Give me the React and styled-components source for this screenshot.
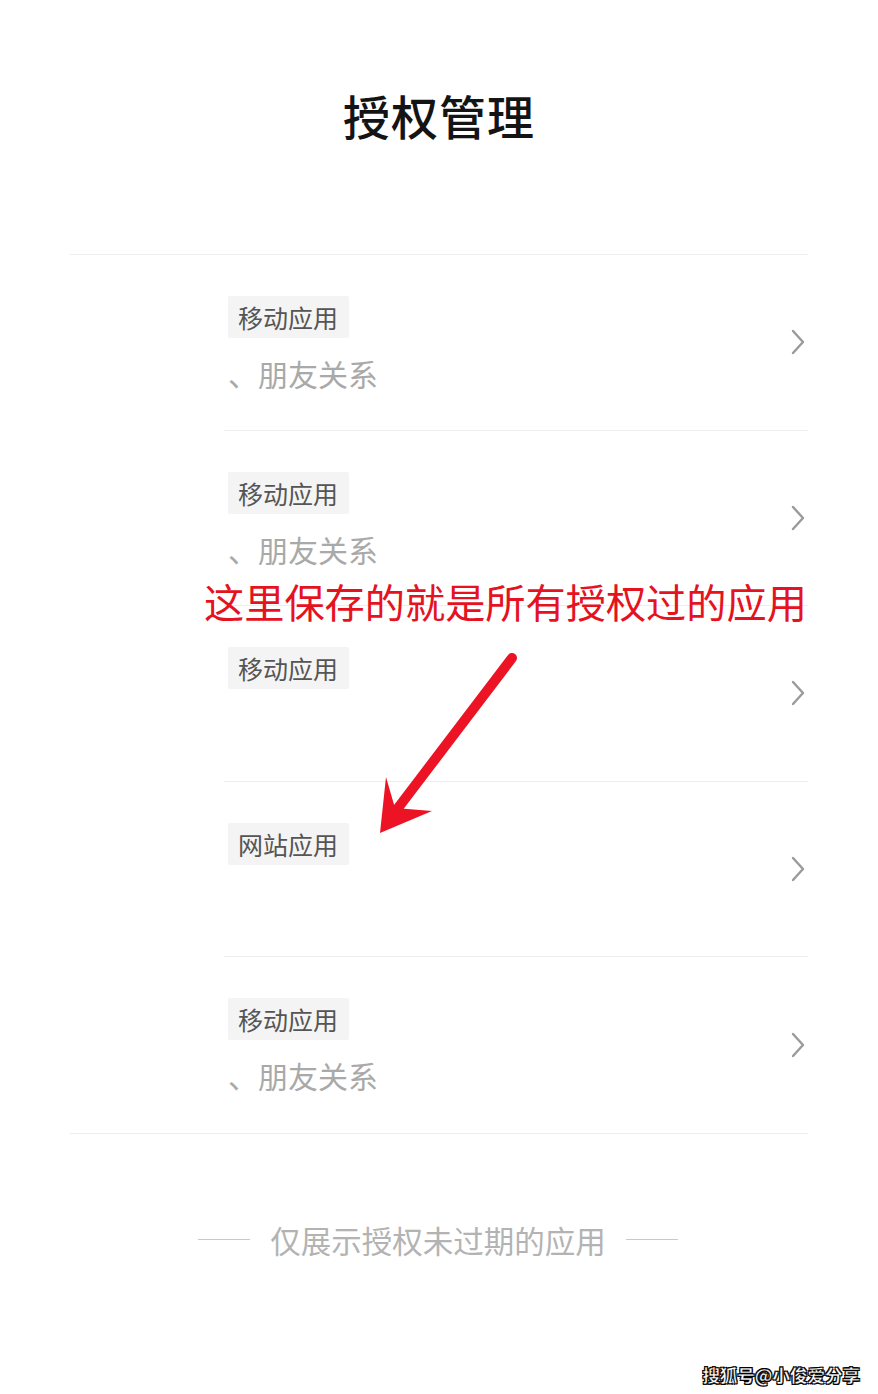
import styled, { createGlobalStyle } from "styled-components"

const GlobalStyle = createGlobalStyle`
	html, body {
		margin: 0;
		padding: 0;
		background: #fff;
	}
	body {
		font-family: "Noto Sans CJK SC", "Noto Sans", sans-serif;
	}
`;

const apps = [
	{ type: "移动应用", desc: "、朋友关系" },
	{ type: "移动应用", desc: "、朋友关系" },
	{ type: "移动应用" },
	{ type: "网站应用" },
	{ type: "移动应用", desc: "、朋友关系" },
];

const Chevron = () => (
	<svg width="16" height="26" viewBox="0 0 16 26" fill="none">
		<path d="M3 2 L13 13 L3 24" stroke="#9a9a9a" strokeWidth="2.4" strokeLinecap="round" strokeLinejoin="round"/>
	</svg>
);

const Arrow = () => (
	<ArrowSvg width="150" height="200" viewBox="0 0 150 200">
		<line x1="142" y1="18" x2="28" y2="168" stroke="#ec1325" strokeWidth="10" strokeLinecap="round"/>
		<path d="M10 193 L16 137 L25 168 L62 171 Z" fill="#ec1325"/>
	</ArrowSvg>
);

export default function App() {
	return (
		<Page>
			<GlobalStyle/>
			<Title>授权管理</Title>
			<List>
				{apps.map((app, i) => (
					<Row key={i} $last={i === apps.length - 1}>
						<RowBody>
							<Tag>{app.type}</Tag>
							{app.desc && <Desc>{app.desc}</Desc>}
						</RowBody>
						<Chevron/>
					</Row>
				))}
			</List>
			<Footer>
				<FooterLine/>
				<FooterText>仅展示授权未过期的应用</FooterText>
				<FooterLine/>
			</Footer>
			<Note>这里保存的就是所有授权过的应用</Note>
			<Arrow/>
			<Watermark>搜狐号@小俊爱分享</Watermark>
		</Page>
	)
}

const Page = styled.div`
	position: relative;
	width: 878px;
	height: 1394px;
	overflow: hidden;
	background: #fff;
`;

const Title = styled.h1`
	margin: 0;
	padding-top: 87px;
	height: 254px;
	box-sizing: border-box;
	text-align: center;
	font-size: 47px;
	line-height: 56px;
	font-weight: 500;
	color: #141414;
	letter-spacing: 1px;
`;

const List = styled.ul`
	list-style: none;
	margin: 0 70px;
	padding: 0;
	border-top: 1px solid #ededed;
	border-bottom: 1px solid #ededed;
`;

const Row = styled.li`
	display: flex;
	align-items: center;
	justify-content: space-between;
	height: 175.5px;
	margin-left: 154px;
	padding-right: 2px;
	box-sizing: border-box;
	border-bottom: ${p => p.$last ? "none" : "1px solid #ededed"};
`;

const RowBody = styled.div`
	align-self: flex-start;
	padding: 41px 0 0 4px;
	display: flex;
	flex-direction: column;
	align-items: flex-start;
`;

const Tag = styled.span`
	background: #f4f4f4;
	color: #555;
	font-size: 25px;
	line-height: 42px;
	padding: 0 11px 0 10px;
	border-radius: 2px;
	position: relative;
`;

const Desc = styled.div`
	margin-top: 17px;
	font-size: 30px;
	line-height: 36px;
	color: #a9a9a9;
`;

const Footer = styled.div`
	display: flex;
	align-items: center;
	justify-content: center;
	gap: 20px;
	margin-top: 88px;
	padding-right: 2px;
`;

const FooterLine = styled.span`
	width: 52px;
	height: 1px;
	background: #c8c8c8;
`;

const FooterText = styled.span`
	font-size: 30.5px;
	line-height: 36px;
	color: #b3b3b3;
`;

const Note = styled.div`
	position: absolute;
	left: 204px;
	top: 577px;
	font-size: 40.2px;
	line-height: 48px;
	color: #e5121f;
	white-space: nowrap;
`;

const ArrowSvg = styled.svg`
	position: absolute;
	left: 370px;
	top: 640px;
`;

const Watermark = styled.div`
	position: absolute;
	right: 18px;
	bottom: 7px;
	font-size: 17.5px;
	line-height: 24px;
	font-weight: 700;
	color: #fff;
	-webkit-text-stroke: 0.4px #000;
	text-shadow: 1px 1px 0 #000, -1px -1px 0 #000, 1px -1px 0 #000, -1px 1px 0 #000;
`;
